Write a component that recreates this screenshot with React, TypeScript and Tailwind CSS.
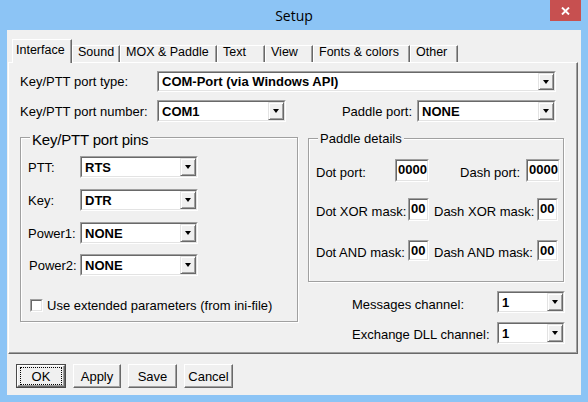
import React from "react";

const sunkenOuter =
  "border border-t-[#a0a0a0] border-l-[#a0a0a0] border-r-white border-b-white";
const sunkenInner =
  "border border-t-[#696969] border-l-[#696969] border-r-[#e3e3e3] border-b-[#e3e3e3]";

function Combo({ className, value }: { className: string; value: string }) {
  return (
    <div className={`flex shrink-0 ${sunkenOuter} ${className}`}>
      <div className={`flex min-w-0 flex-1 bg-white ${sunkenInner}`}>
        <span className="flex flex-1 items-center overflow-hidden whitespace-nowrap pl-[3px] text-[13px] font-bold leading-none">
          {value}
        </span>
        <span className="flex w-[16px] items-center justify-center border border-t-[#e3e3e3] border-l-[#e3e3e3] border-r-[#696969] border-b-[#696969] bg-[#f0f0f0] shadow-[inset_1px_1px_0_#fff,inset_-1px_-1px_0_#a0a0a0]">
          <span className="h-0 w-0 border-x-[3px] border-t-[4px] border-x-transparent border-t-black" />
        </span>
      </div>
    </div>
  );
}

function Edit({ className, value }: { className: string; value: string }) {
  return (
    <div className={`shrink-0 ${sunkenOuter} ${className}`}>
      <div
        className={`h-full bg-white pl-px pt-px text-[13px] font-bold leading-[15px] ${sunkenInner}`}
      >
        {value}
      </div>
    </div>
  );
}

function Group({
  title,
  titleClass,
  className,
  children,
}: {
  title: string;
  titleClass: string;
  className: string;
  children: React.ReactNode;
}) {
  return (
    <div
      className={`relative shrink-0 border border-[#a0a0a0] shadow-[inset_1px_1px_0_#fff,1px_1px_0_#fff] ${className}`}
    >
      <span
        className={`absolute left-[9px] whitespace-nowrap bg-[#f0f0f0] px-[2px] ${titleClass}`}
      >
        {title}
      </span>
      {children}
    </div>
  );
}

function Tab({ label, width, active }: { label: string; width: string; active?: boolean }) {
  if (active) {
    return (
      <div
        className={`relative z-10 -mb-px h-[24px] shrink-0 border-t border-l border-r border-t-white border-l-white border-r-[#696969] bg-[#f0f0f0] pl-[3px] pt-[4px] text-[12.5px] leading-[13px] shadow-[inset_-1px_0_0_#a0a0a0] ${width}`}
      >
        {label}
      </div>
    );
  }
  return (
    <div
      className={`h-[17px] shrink-0 border-t border-l border-r border-t-white border-l-white border-r-[#696969] bg-[#f0f0f0] pl-[5px] text-[12.5px] leading-[13px] shadow-[inset_-1px_0_0_#a0a0a0] ${width}`}
    >
      {label}
    </div>
  );
}

function Button({ label, width, isDefault }: { label: string; width: string; isDefault?: boolean }) {
  if (isDefault) {
    return (
      <button className={`h-[24px] shrink-0 border border-[#4a4a4a] bg-[#f0f0f0] p-0 ${width}`}>
        <div className="flex h-full items-center justify-center border border-t-white border-l-white border-r-[#696969] border-b-[#696969] shadow-[inset_-1px_-1px_0_#a0a0a0]">
          <div className="flex h-[18px] w-[42px] items-center justify-center border border-dotted border-black text-[13px] leading-none">
            {label}
          </div>
        </div>
      </button>
    );
  }
  return (
    <button
      className={`flex h-[24px] shrink-0 items-center justify-center border border-t-white border-l-white border-r-[#696969] border-b-[#696969] bg-[#f0f0f0] text-[13px] leading-none shadow-[inset_-1px_-1px_0_#a0a0a0] ${width}`}
    >
      {label}
    </button>
  );
}

export default function App() {
  return (
    <div className="flex h-[402px] w-[588px] flex-col overflow-hidden bg-[#8cc4f5] font-['Liberation_Sans',Arial,sans-serif] text-black">
      {/* title bar */}
      <div className="relative flex h-[30px] shrink-0 justify-center">
        <span className="mt-[7px] font-['Open_Sans',sans-serif] text-[14px] leading-[18px] text-black">
          Setup
        </span>
        <button className="absolute right-[7px] top-0 flex h-[21px] w-[31px] items-center justify-center bg-[#c75050]">
          <svg width="9" height="8" viewBox="0 0 9 8">
            <path d="M1 0.5 L8 7.5 M8 0.5 L1 7.5" stroke="#fff" strokeWidth="1.9" />
          </svg>
        </button>
      </div>

      {/* client area */}
      <div className="mx-[7px] flex h-[365px] shrink-0 flex-col bg-[#f0f0f0] pt-[9px]">
        <div className="flex h-[23px] items-end pl-[5px]">
          <Tab label="Interface" width="w-[60px]" active />
          <Tab label="Sound" width="w-[48px]" />
          <Tab label="MOX & Paddle" width="w-[97px]" />
          <Tab label="Text" width="w-[48px]" />
          <Tab label="View" width="w-[48px]" />
          <Tab label="Fonts & colors" width="w-[97px]" />
          <Tab label="Other" width="w-[48px]" />
        </div>

        <div className="ml-px flex h-[292px] w-[570px] flex-col border border-t-white border-l-white border-r-[#696969] border-b-[#696969] pl-[11px] pt-[8px] text-[13px] leading-[15px] shadow-[inset_-1px_-1px_0_#a0a0a0]">
          <div className="flex h-[21px] items-center">
            <span className="w-[137px] shrink-0">Key/PTT port type:</span>
            <Combo className="h-[21px] w-[399px]" value="COM-Port (via Windows API)" />
          </div>

          <div className="mt-[8px] flex items-center">
            <span className="w-[137px] shrink-0">Key/PTT port number:</span>
            <Combo className="h-[22px] w-[129px]" value="COM1" />
            <span className="w-[131px] shrink-0 pr-[5px] text-right">Paddle port:</span>
            <Combo className="h-[22px] w-[139px]" value="NONE" />
          </div>

          <div className="mt-[15px] flex">
            <Group
              title="Key/PTT port pins"
              titleClass="top-[-7px] text-[15px] leading-[17px] tracking-[-0.2px]"
              className="h-[185px] w-[278px] pl-[7px] pt-[18px]"
            >
              <div className="flex items-center">
                <span className="w-[52px] shrink-0">PTT:</span>
                <Combo className="h-[22px] w-[118px]" value="RTS" />
              </div>
              <div className="mt-[11px] flex items-center">
                <span className="w-[52px] shrink-0">Key:</span>
                <Combo className="h-[22px] w-[118px]" value="DTR" />
              </div>
              <div className="mt-[11px] flex items-center">
                <span className="w-[52px] shrink-0">Power1:</span>
                <Combo className="h-[22px] w-[118px]" value="NONE" />
              </div>
              <div className="mt-[10px] flex items-center">
                <span className="w-[52px] shrink-0 pl-px">Power2:</span>
                <Combo className="h-[22px] w-[118px]" value="NONE" />
              </div>
              <div className="ml-[2px] mt-[22px] flex items-center">
                <span className={`h-[13px] w-[13px] shrink-0 ${sunkenOuter}`}>
                  <span className={`block h-full w-full bg-white ${sunkenInner}`} />
                </span>
                <span className="ml-[4px] whitespace-nowrap">
                  Use extended parameters (from ini-file)
                </span>
              </div>
            </Group>

            <div className="ml-[10px] flex w-[257px] shrink-0 flex-col">
              <Group
                title="Paddle details"
                titleClass="top-[-8px] text-[13px] leading-[15px]"
                className="mt-px h-[144px] w-[256px] pl-[7px] pt-[20px]"
              >
                <div className="flex items-center whitespace-nowrap">
                  <span className="mt-[4px] w-[79px] shrink-0">Dot port:</span>
                  <Edit className="h-[23px] w-[34px]" value="0000" />
                  <span className="mt-[4px] w-[97px] shrink-0 pr-[6px] text-right">Dash port:</span>
                  <Edit className="h-[23px] w-[34px]" value="0000" />
                </div>
                <div className="mt-[16px] flex items-center whitespace-nowrap">
                  <span className="mt-[4px] w-[92px] shrink-0">Dot XOR mask:</span>
                  <Edit className="h-[23px] w-[21px]" value="00" />
                  <span className="mt-[4px] w-[108px] shrink-0 pl-[5px]">Dash XOR mask:</span>
                  <Edit className="h-[23px] w-[21px]" value="00" />
                </div>
                <div className="mt-[19px] flex items-center whitespace-nowrap">
                  <span className="mt-[4px] w-[92px] shrink-0">Dot AND mask:</span>
                  <Edit className="h-[21px] w-[21px]" value="00" />
                  <span className="mt-[4px] w-[108px] shrink-0 pl-[5px]">Dash AND mask:</span>
                  <Edit className="h-[21px] w-[21px]" value="00" />
                </div>
              </Group>

              <div className="ml-[44px] mt-[9px] flex items-center">
                <span className="mt-[4px] w-[145px] shrink-0">Messages channel:</span>
                <Combo className="h-[22px] w-[68px]" value="1" />
              </div>
              <div className="ml-[44px] mt-[9px] flex items-center">
                <span className="mt-[2px] w-[145px] shrink-0">Exchange DLL channel:</span>
                <Combo className="h-[22px] w-[68px]" value="1" />
              </div>
            </div>
          </div>
        </div>

        <div className="mt-[10px] flex gap-[7px] pl-[9px]">
          <Button label="OK" width="w-[50px]" isDefault />
          <Button label="Apply" width="w-[48px]" />
          <Button label="Save" width="w-[49px]" />
          <Button label="Cancel" width="w-[49px]" />
        </div>
      </div>
    </div>
  );
}
